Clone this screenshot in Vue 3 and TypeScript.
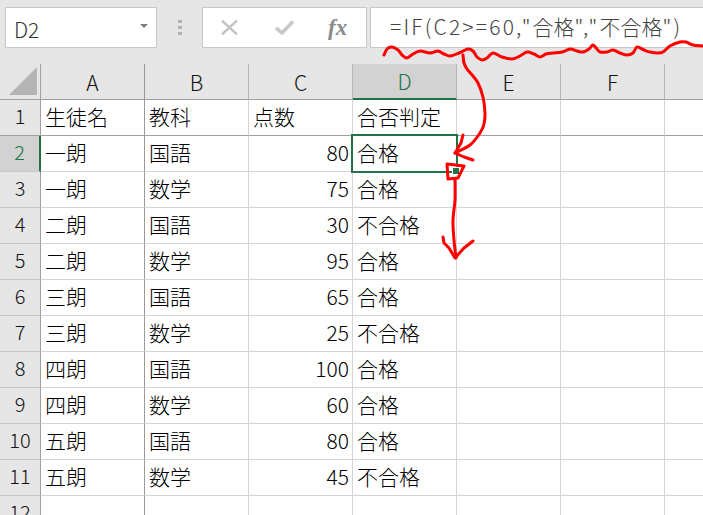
<script setup lang="ts">
interface Row {
  name: string
  subject: string
  score: number
  result: string
}

type Point = [number, number]

const columns = ['A', 'B', 'C', 'D', 'E', 'F', '']

const rows: Row[] = [
  { name: '一朗', subject: '国語', score: 80, result: '合格' },
  { name: '一朗', subject: '数学', score: 75, result: '合格' },
  { name: '二朗', subject: '国語', score: 30, result: '不合格' },
  { name: '二朗', subject: '数学', score: 95, result: '合格' },
  { name: '三朗', subject: '国語', score: 65, result: '合格' },
  { name: '三朗', subject: '数学', score: 25, result: '不合格' },
  { name: '四朗', subject: '国語', score: 100, result: '合格' },
  { name: '四朗', subject: '数学', score: 60, result: '合格' },
  { name: '五朗', subject: '国語', score: 80, result: '合格' },
  { name: '五朗', subject: '数学', score: 45, result: '不合格' },
]

const blankCols = [4, 5, 6]

// Catmull-Rom through the traced points, for the hand drawn strokes
const smooth = (pts: Point[]): string => {
  let d = `M${pts[0][0]} ${pts[0][1]}`
  for (let i = 0; i < pts.length - 1; i++) {
    const p0 = pts[Math.max(i - 1, 0)]
    const p1 = pts[i]
    const p2 = pts[i + 1]
    const p3 = pts[Math.min(i + 2, pts.length - 1)]
    const c1x = p1[0] + (p2[0] - p0[0]) / 6
    const c1y = p1[1] + (p2[1] - p0[1]) / 6
    const c2x = p2[0] - (p3[0] - p1[0]) / 6
    const c2y = p2[1] - (p3[1] - p1[1]) / 6
    d += ` C${c1x.toFixed(1)} ${c1y.toFixed(1)} ${c2x.toFixed(1)} ${c2y.toFixed(1)} ${p2[0]} ${p2[1]}`
  }
  return d
}

const strokes: string[] = [
  // underline below the formula
  smooth([
    [384, 55], [387, 49], [392, 47], [398, 50], [402, 55], [407, 58], [413, 54], [420, 51],
    [430, 53], [438, 51], [444, 54], [450, 56], [459, 53], [468, 49], [473, 51], [477, 57],
    [482, 60], [487, 58], [493, 53], [502, 57], [512, 59], [520, 56], [527, 52], [534, 54],
    [540, 57], [546, 54], [553, 53], [562, 52], [570, 49], [577, 51], [583, 52], [589, 49],
    [593, 45], [597, 49], [600, 52], [607, 52], [613, 50], [620, 53], [627, 55], [633, 53],
    [637, 47], [644, 50], [650, 52], [657, 53], [663, 52], [670, 46], [680, 42], [686, 42],
    [693, 45], [703, 46],
  ]),
  // curve down to the fill handle
  smooth([[463, 55], [464, 63], [467, 69], [473, 76], [478, 83], [483, 97], [485, 113], [484, 124], [480, 133], [470, 145], [455, 153]]),
  'M463 135 L461 143 L455 153 L464 157 L473 160',
  // box round the handle
  'M447 164 L464 166 L458 178 L448 179 Z',
  // arrow down
  smooth([[455, 179], [455, 200], [453, 220], [454, 240], [456, 258]]),
  'M443 237 L444 243 L449 248 L455 258 L464 248 L473 241',
]
</script>

<template>
  <div class="app">
    <div class="toolbar">
      <div class="name-box">
        <span>D2</span>
        <i class="caret"></i>
      </div>
      <div class="grip"><b></b><b></b><b></b></div>
      <div class="fx-box">
        <svg width="17" height="15" viewBox="0 0 17 15" class="cancel">
          <path d="M1 0.5 L16 14.5 M16 0.5 L1 14.5" stroke="#c4c4c4" stroke-width="2.4" fill="none" />
        </svg>
        <svg width="19" height="15" viewBox="0 0 19 15" class="enter">
          <path d="M1 8 L7 13 L18 1.5" stroke="#c8c8c8" stroke-width="3.6" fill="none" />
        </svg>
        <span class="fx">fx</span>
      </div>
      <div class="formula">
        <span class="ascii">=IF(C2&gt;=60,"</span><span class="kanji">合格</span><span class="ascii">","</span><span class="kanji">不合格</span><span class="ascii">")</span>
      </div>
    </div>

    <div class="sheet">
      <div class="corner"><i></i></div>
      <div
        v-for="(col, i) in columns"
        :key="i"
        class="col-head"
        :class="{ active: col === 'D', strong: col === 'A' }"
      >
        {{ col }}
      </div>

      <div class="row-head first">1</div>
      <div class="cell first strong">生徒名</div>
      <div class="cell first">教科</div>
      <div class="cell first">点数</div>
      <div class="cell first">合否判定</div>
      <div v-for="c in blankCols" :key="'h' + c" class="cell first"></div>

      <template v-for="(row, i) in rows" :key="i">
        <div class="row-head" :class="{ active: i === 0 }">{{ i + 2 }}</div>
        <div class="cell strong">{{ row.name }}</div>
        <div class="cell">{{ row.subject }}</div>
        <div class="cell num">{{ row.score }}</div>
        <div class="cell" :class="{ selected: i === 0 }">
          {{ row.result }}
          <i v-if="i === 0" class="handle"></i>
        </div>
        <div v-for="c in blankCols" :key="c" class="cell"></div>
      </template>

      <div class="row-head">12</div>
      <div class="cell strong"></div>
      <div v-for="c in 6" :key="'e' + c" class="cell"></div>
    </div>

    <!-- hand drawn red marks on top of the screenshot -->
    <svg class="marks" width="703" height="515" viewBox="0 0 703 515">
      <g fill="none" stroke="#ff0000" stroke-width="3" stroke-linecap="round" stroke-linejoin="round">
        <path v-for="(d, i) in strokes" :key="i" :d="d" />
      </g>
    </svg>
  </div>
</template>

<style scoped>
.app {
  position: relative;
  width: 703px;
  height: 515px;
  overflow: hidden;
  background: #e6e6e6;
  font-family: 'Noto Sans CJK JP', 'Noto Sans', sans-serif;
  font-weight: 300;
  color: #1a1a1a;
}

.toolbar {
  display: flex;
  align-items: stretch;
  height: 41px;
  padding: 7px 0 16px 5px;
}

.name-box {
  width: 152px;
  box-sizing: border-box;
  display: flex;
  align-items: center;
  justify-content: space-between;
  padding: 2px 8px 0 8px;
  background: #fff;
  border: 1px solid #c8c8c8;
  font-size: 21px;
  color: #333;
}

.caret {
  width: 0;
  height: 0;
  margin-top: -6px;
  border-left: 4px solid transparent;
  border-right: 4px solid transparent;
  border-top: 4px solid #7f7f7f;
}

.grip {
  width: 45px;
  display: flex;
  flex-direction: column;
  align-items: center;
  justify-content: center;
  gap: 3px;
}

.grip b {
  width: 4px;
  height: 3px;
  background: #b4b4b4;
}

.fx-box {
  width: 165px;
  box-sizing: border-box;
  display: flex;
  align-items: center;
  padding: 0 0 0 18px;
  background: #fff;
  border: 1px solid #c8c8c8;
}

.cancel {
  flex: none;
}

.enter {
  flex: none;
  margin-left: 37px;
}

.fx {
  margin-left: 34px;
  font-family: 'Liberation Serif', serif;
  font-style: italic;
  font-weight: 700;
  font-size: 23px;
  line-height: 1;
  color: #8a8a8a;
}

.formula {
  flex: 1;
  margin-left: 3px;
  padding: 0 0 4px 19px;
  display: flex;
  align-items: center;
  background: #fff;
  border: 1px solid #c8c8c8;
  border-right: none;
  font-size: 21px;
  color: #444;
  white-space: nowrap;
}

.ascii {
  letter-spacing: 2.2px;
}

.sheet {
  display: grid;
  grid-template-columns: 41px repeat(7, 104px);
  grid-template-rows: repeat(13, 36px);
  background: #fff;
}

.corner {
  position: relative;
  background: #e6e6e6;
  border-right: 1px solid #a0a0a0;
  border-bottom: 1px solid #a0a0a0;
}

.corner i {
  position: absolute;
  right: 3px;
  bottom: 4px;
  width: 0;
  height: 0;
  border-left: 28px solid transparent;
  border-bottom: 28px solid #b4b4b4;
}

.col-head {
  display: flex;
  align-items: center;
  justify-content: center;
  background: #e6e6e6;
  border-right: 1px solid #b4b4b4;
  border-bottom: 1px solid #a0a0a0;
  font-size: 21px;
  color: #111;
}

.col-head.strong {
  border-right-color: #9a9a9a;
}

.col-head.active {
  background: #d2d2d2;
  border-bottom: 2px solid #217346;
  color: #217346;
}

.row-head {
  display: flex;
  align-items: center;
  justify-content: center;
  padding-bottom: 4px;
  background: #e6e6e6;
  border-right: 1px solid #a0a0a0;
  border-bottom: 1px solid #c8c8c8;
  font-size: 20px;
  color: #111;
}

.row-head.first {
  border-bottom-color: #a0a0a0;
}

.row-head.active {
  background: #d2d2d2;
  border-right: 2px solid #217346;
  color: #217346;
}

.cell {
  position: relative;
  display: flex;
  align-items: center;
  padding: 0 3px 4px 4px;
  background: #fff;
  border-right: 1px solid #d4d4d4;
  border-bottom: 1px solid #d4d4d4;
  font-size: 21px;
  color: #000;
  white-space: nowrap;
}

.cell.strong {
  border-right-color: #9a9a9a;
}

.cell.first {
  border-bottom-color: #a0a0a0;
}

.cell.num {
  justify-content: flex-end;
}

.cell.selected {
  z-index: 1;
}

.cell.selected::before {
  content: '';
  position: absolute;
  left: -2px;
  top: -2px;
  right: -2px;
  bottom: -2px;
  border: 2px solid #217346;
}

.handle {
  position: absolute;
  right: -4px;
  bottom: -4px;
  width: 6px;
  height: 6px;
  background: #217346;
  border: 1px solid #fff;
}

.marks {
  position: absolute;
  left: 0;
  top: 0;
  z-index: 2;
  pointer-events: none;
}
</style>

<style>
html,
body {
  margin: 0;
  overflow: hidden;
}
</style>
